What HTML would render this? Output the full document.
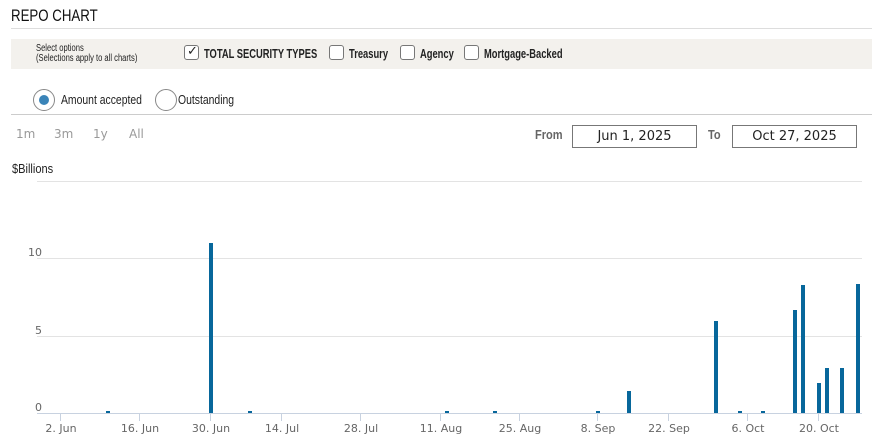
<!DOCTYPE html>
<html><head><meta charset="utf-8"><style>
*{margin:0;padding:0;box-sizing:border-box}
body{width:883px;height:446px;background:#fff;position:relative;overflow:hidden;font-family:"Liberation Sans",sans-serif;color:#222}
.a{position:absolute;white-space:nowrap;transform-origin:left}
.cb{position:absolute;width:15px;height:15px;border:1px solid #777;border-radius:3px;background:#fff}
.rd{position:absolute;width:22px;height:22px;border:1px solid #888;border-radius:50%;background:#fff}
.dv{font-family:"DejaVu Sans",sans-serif}
.box{position:absolute;height:23px;border:1px solid #777;font-family:"DejaVu Sans",sans-serif;font-size:13px;text-align:center;line-height:21px;color:#222}
</style></head><body>
<div class="a" style="left:11px;top:6px;font-size:17px;color:#111;transform:scaleX(.78)">REPO CHART</div>
<div class="a" style="left:11px;top:28px;width:861px;height:1px;background:#ddd"></div>
<div class="a" style="left:11px;top:39px;width:861px;height:30px;background:#f3f1ed"></div>
<div class="a" style="left:36px;top:44px;font-size:10px;line-height:10px;color:#222;transform:scaleX(.76)">Select options<br>(Selections apply to all charts)</div>
<div class="cb" style="left:184px;top:45px"></div>
<div class="a" style="left:187px;top:43px;font-size:13px">✓</div>
<div class="a" style="left:204px;top:46px;font-size:13px;font-weight:bold;transform:scaleX(.72)">TOTAL SECURITY TYPES</div>
<div class="cb" style="left:329px;top:45px"></div>
<div class="a" style="left:349px;top:46px;font-size:13px;font-weight:bold;transform:scaleX(.72)">Treasury</div>
<div class="cb" style="left:400px;top:45px"></div>
<div class="a" style="left:420px;top:46px;font-size:13px;font-weight:bold;transform:scaleX(.72)">Agency</div>
<div class="cb" style="left:464px;top:45px"></div>
<div class="a" style="left:484px;top:46px;font-size:13px;font-weight:bold;transform:scaleX(.72)">Mortgage-Backed</div>
<div class="rd" style="left:33px;top:89px"></div>
<div class="a" style="left:39px;top:95px;width:10px;height:10px;border-radius:50%;background:#3a84b8"></div>
<div class="a" style="left:61px;top:92px;font-size:13px;transform:scaleX(.8)">Amount accepted</div>
<div class="rd" style="left:155px;top:89px"></div>
<div class="a" style="left:178px;top:92px;font-size:13px;transform:scaleX(.8)">Outstanding</div>
<div class="a" style="left:11px;top:114px;width:861px;height:1px;background:#ccc"></div>
<div class="a dv" style="left:16px;top:127px;font-size:12px;color:#999">1m</div>
<div class="a dv" style="left:54px;top:127px;font-size:12px;color:#999">3m</div>
<div class="a dv" style="left:93px;top:127px;font-size:12px;color:#999">1y</div>
<div class="a dv" style="left:129px;top:127px;font-size:12px;color:#999">All</div>
<div class="a" style="left:535px;top:127px;font-size:13px;font-weight:bold;color:#666;transform:scaleX(.85)">From</div>
<div class="box" style="left:572px;top:125px;width:125px">Jun 1, 2025</div>
<div class="a" style="left:708px;top:127px;font-size:13px;font-weight:bold;color:#666;transform:scaleX(.85)">To</div>
<div class="box" style="left:732px;top:125px;width:125px">Oct 27, 2025</div>
<div class="a" style="left:12px;top:161px;font-size:13px;transform:scaleX(.85)">$Billions</div>
<svg class="a" style="left:0;top:0" width="883" height="446" font-family="DejaVu Sans" font-size="11" fill="#666">
<g stroke="#e3e3e3"><line x1="37" x2="862" y1="181.5" y2="181.5"/><line x1="37" x2="862" y1="258.5" y2="258.5"/><line x1="37" x2="862" y1="336.5" y2="336.5"/></g>
<line x1="37" x2="862" y1="413.5" y2="413.5" stroke="#c8d2e0"/>
<g stroke="#c8d2e0"><line x1="60.5" x2="60.5" y1="413" y2="421"/><line x1="139.5" x2="139.5" y1="413" y2="421"/><line x1="210.5" x2="210.5" y1="413" y2="421"/><line x1="281.5" x2="281.5" y1="413" y2="421"/><line x1="360.5" x2="360.5" y1="413" y2="421"/><line x1="440.5" x2="440.5" y1="413" y2="421"/><line x1="519.5" x2="519.5" y1="413" y2="421"/><line x1="597.5" x2="597.5" y1="413" y2="421"/><line x1="668.5" x2="668.5" y1="413" y2="421"/><line x1="747.5" x2="747.5" y1="413" y2="421"/><line x1="818.5" x2="818.5" y1="413" y2="421"/></g>
<g text-anchor="end"><text x="42" y="256">10</text><text x="42" y="334">5</text><text x="42" y="411">0</text></g>
<g text-anchor="middle"><text x="61" y="432">2. Jun</text><text x="140" y="432">16. Jun</text><text x="211" y="432">30. Jun</text><text x="282" y="432">14. Jul</text><text x="361" y="432">28. Jul</text><text x="441" y="432">11. Aug</text><text x="520" y="432">25. Aug</text><text x="598" y="432">8. Sep</text><text x="669" y="432">22. Sep</text><text x="748" y="432">6. Oct</text><text x="819" y="432">20. Oct</text></g>
<g fill="#07679b">
<rect x="209" y="243" width="4" height="170"/>
<rect x="627" y="391" width="4" height="22"/>
<rect x="714" y="321" width="4" height="92"/>
<rect x="793" y="310" width="4" height="103"/>
<rect x="801" y="285" width="4" height="128"/>
<rect x="817" y="383" width="4" height="30"/>
<rect x="825" y="368" width="4" height="45"/>
<rect x="840" y="368" width="4" height="45"/>
<rect x="856" y="284" width="4" height="129"/>
<rect x="106" y="411" width="4" height="2"/><rect x="248" y="411" width="4" height="2"/><rect x="445" y="411" width="4" height="2"/><rect x="493" y="411" width="4" height="2"/><rect x="596" y="411" width="4" height="2"/><rect x="738" y="411" width="4" height="2"/><rect x="761" y="411" width="4" height="2"/>
</g>
</svg>
</body></html>
